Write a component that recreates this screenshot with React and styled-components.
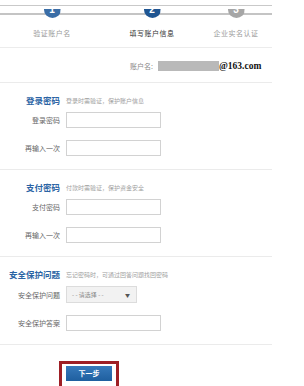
import React from 'react';
import styled, { createGlobalStyle } from 'styled-components';

const GlobalStyle = createGlobalStyle`
    html, body {
        margin: 0;
        padding: 0;
        background: #fff;
        overflow: hidden;
    }

    body {
        font-family: "Noto Sans CJK SC", "Noto Sans", sans-serif;
        color: #555;
    }
`;

const Page = styled.div`
    width: 272px;
    margin-top: 5px;
    border-top: 1px solid #c9c9c9;
`;

const StepRow = styled.div`
    display: grid;
    grid-template-columns: 104px 96px 72px;
    height: 42px;
    box-sizing: border-box;
    border-bottom: 1px solid #ececec;
    background: linear-gradient(#c4c4c4, #c4c4c4) no-repeat 0 7px / 100% 2px;
`;

const Step = styled.div`
    display: flex;
    flex-direction: column;
    align-items: center;
`;

const Dot = styled.div`
    width: 17px;
    height: 17px;
    margin-top: -5px;
    border-radius: 50%;
    background: ${p => p.$color};
    clip-path: inset(8px 0 0 0);
    color: #fff;
    font: bold 10px/17px "Liberation Sans", sans-serif;
    text-align: center;
`;

const StepLabel = styled.div`
    margin-top: 10px;
    font-size: 7px;
    line-height: 10px;
    letter-spacing: 0.5px;
    color: ${p => (p.$active ? '#333' : '#9a9a9a')};
`;

const AccountRow = styled.div`
    display: flex;
    align-items: center;
    height: 35px;
    box-sizing: border-box;
    padding: 14px 0 12px 130px;
    border-bottom: 1px solid #ebebeb;
    font-size: 7px;
    color: #888;
`;

const Masked = styled.span`
    display: inline-block;
    width: 61px;
    height: 10px;
    margin-left: 5px;
    background: #b9b9b9;
`;

const Email = styled.span`
    font: bold 9.5px "Liberation Serif", serif;
    color: #111;
`;

const Section = styled.div`
    padding: 11px 0 13px;
    border-bottom: 1px solid #ebebeb;
    display: flex;
    flex-direction: column;
    gap: 12px;
`;

const Heading = styled.div`
    display: grid;
    grid-template-columns: 60px auto;
    column-gap: 6px;
    align-items: center;
    height: 10px;
    margin-bottom: -4px;

    h2 {
        margin: 0;
        text-align: right;
        font-size: 8.5px;
        font-weight: bold;
        color: #2b64a4;
        white-space: nowrap;
    }

    span {
        font-size: 6px;
        color: #a0a0a0;
        white-space: nowrap;
    }
`;

const Field = styled.label`
    display: grid;
    grid-template-columns: 60px 95px;
    column-gap: 6px;
    align-items: center;

    span {
        text-align: right;
        font-size: 7px;
        color: #666;
        white-space: nowrap;
    }
`;

const Input = styled.input`
    width: 95px;
    height: 16px;
    box-sizing: border-box;
    margin: 0;
    border: 1px solid #d2d2d2;
    background: #fff;
`;

const Select = styled.div`
    width: 71px;
    height: 17px;
    box-sizing: border-box;
    display: flex;
    align-items: center;
    justify-content: space-between;
    padding: 0 6px 0 5px;
    border: 1px solid #dcdcdc;
    background: #f2f2f2;
    font-size: 6px;
    color: #888;

    i {
        font-style: normal;
        font-size: 5px;
        color: #555;
    }
`;

const Footer = styled.div`
    padding: 12px 0 0 59px;
`;

const Highlight = styled.div`
    display: inline-block;
    border: 3px solid #9e1f25;
    padding: 2px 4px 8px;
`;

const NextButton = styled.button`
    display: block;
    width: 46px;
    height: 15px;
    border: none;
    padding: 0;
    background: linear-gradient(#3679bb, #1f5f9f);
    color: #fff;
    font-family: "Noto Sans CJK SC", sans-serif;
    font-size: 7px;
    font-weight: bold;
`;

const steps = [
    { n: 1, label: '验证账户名', color: '#3a6da6' },
    { n: 2, label: '填写账户信息', color: '#1f5592', active: true },
    { n: 3, label: '企业实名认证', color: '#a6a6a6' },
];

function PasswordSection({ title, hint, label }) {
    return (
        <Section>
            <Heading>
                <h2>{title}</h2>
                <span>{hint}</span>
            </Heading>
            <Field>
                <span>{label}</span>
                <Input type="password" />
            </Field>
            <Field>
                <span>再输入一次</span>
                <Input type="password" />
            </Field>
        </Section>
    );
}

export default function App() {
    return (
        <>
            <GlobalStyle />
            <Page>
                <StepRow>
                    {steps.map(s => (
                        <Step key={s.n}>
                            <Dot $color={s.color}>{s.n}</Dot>
                            <StepLabel $active={s.active}>{s.label}</StepLabel>
                        </Step>
                    ))}
                </StepRow>

                <AccountRow>
                    账户名:
                    <Masked />
                    <Email>@163.com</Email>
                </AccountRow>

                <PasswordSection title="登录密码" hint="登录时需验证，保护账户信息" label="登录密码" />
                <PasswordSection title="支付密码" hint="付款时需验证，保护资金安全" label="支付密码" />

                <Section>
                    <Heading>
                        <h2>安全保护问题</h2>
                        <span>忘记密码时，可通过回答问题找回密码</span>
                    </Heading>
                    <Field>
                        <span>安全保护问题</span>
                        <Select>- - 请选择 - - <i>▼</i></Select>
                    </Field>
                    <Field>
                        <span>安全保护答案</span>
                        <Input type="text" />
                    </Field>
                </Section>

                <Footer>
                    <Highlight>
                        <NextButton>下一步</NextButton>
                    </Highlight>
                </Footer>
            </Page>
        </>
    );
}
